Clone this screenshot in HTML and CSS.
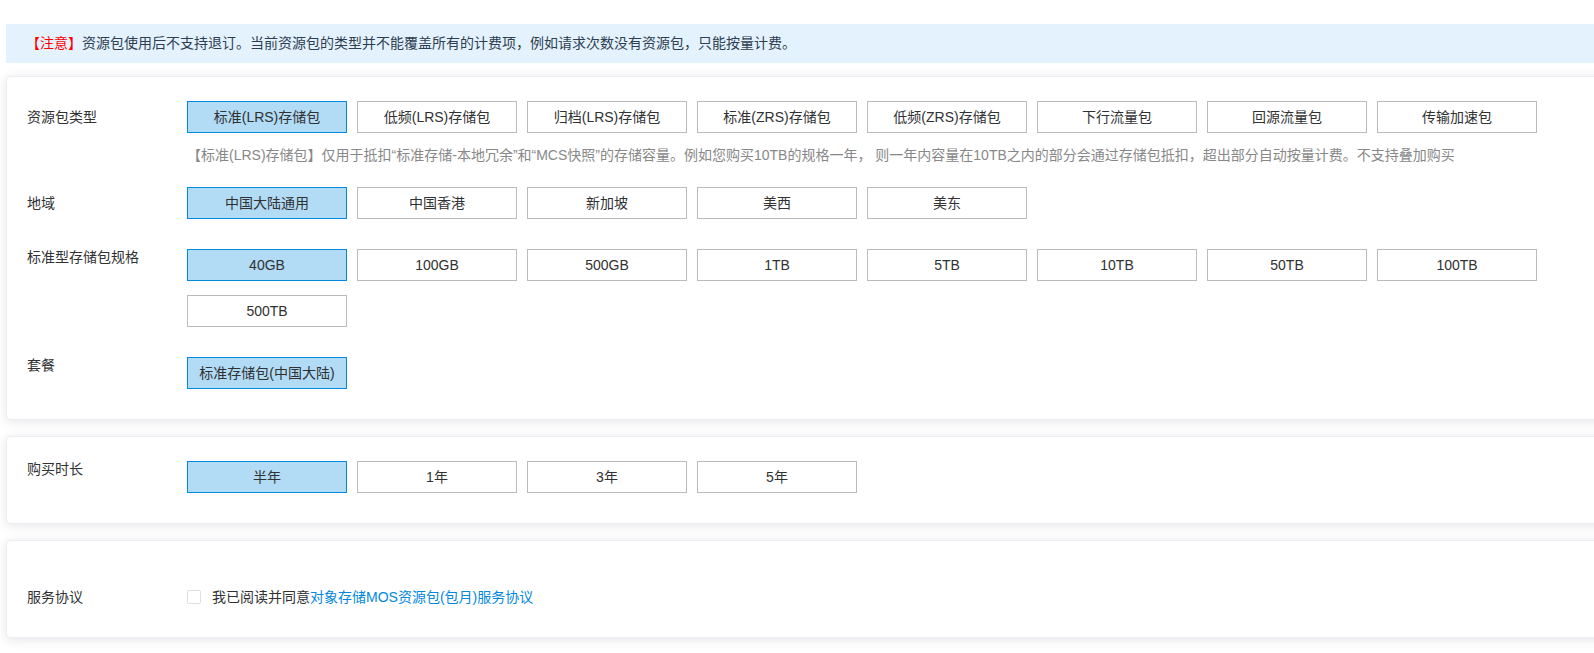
FILE: index.html
```html
<!DOCTYPE html>
<html lang="zh-CN">
<head>
    <meta charset="UTF-8">
    <meta name="viewport" content="width=device-width, initial-scale=1.0">
    <title>购买资源包</title>
    <link rel="stylesheet" href="styles.css">
</head>
<body>
    <main class="page">
        <div class="notice"><span class="warn">【注意】</span>资源包使用后不支持退订。当前资源包的类型并不能覆盖所有的计费项，例如请求次数没有资源包，只能按量计费。</div>

        <section class="card">
            <div class="row row-hint">
                <div class="label label-center" id="type">资源包类型</div>
                <div class="content">
                    <div class="options" role="group" aria-labelledby="type">
                        <button type="button" class="option active">标准(LRS)存储包</button>
                        <button type="button" class="option">低频(LRS)存储包</button>
                        <button type="button" class="option">归档(LRS)存储包</button>
                        <button type="button" class="option">标准(ZRS)存储包</button>
                        <button type="button" class="option">低频(ZRS)存储包</button>
                        <button type="button" class="option">下行流量包</button>
                        <button type="button" class="option">回源流量包</button>
                        <button type="button" class="option">传输加速包</button>
                    </div>
                    <p class="hint">【标准(LRS)存储包】仅用于抵扣“标准存储-本地冗余”和“MCS快照”的存储容量。例如您购买10TB的规格一年， 则一年内容量在10TB之内的部分会通过存储包抵扣，超出部分自动按量计费。不支持叠加购买</p>
                </div>
            </div>
            <div class="row">
                <div class="label label-center" id="region">地域</div>
                <div class="content options" role="group" aria-labelledby="region">
                    <button type="button" class="option active">中国大陆通用</button>
                    <button type="button" class="option">中国香港</button>
                    <button type="button" class="option">新加坡</button>
                    <button type="button" class="option">美西</button>
                    <button type="button" class="option">美东</button>
                </div>
            </div>
            <div class="row">
                <div class="label" id="spec">标准型存储包规格</div>
                <div class="content options" role="group" aria-labelledby="spec">
                    <button type="button" class="option active">40GB</button>
                    <button type="button" class="option">100GB</button>
                    <button type="button" class="option">500GB</button>
                    <button type="button" class="option">1TB</button>
                    <button type="button" class="option">5TB</button>
                    <button type="button" class="option">10TB</button>
                    <button type="button" class="option">50TB</button>
                    <button type="button" class="option">100TB</button>
                    <button type="button" class="option">500TB</button>
                </div>
            </div>
            <div class="row">
                <div class="label" id="package">套餐</div>
                <div class="content options" role="group" aria-labelledby="package">
                    <button type="button" class="option active">标准存储包(中国大陆)</button>
                </div>
            </div>
        </section>

        <section class="card">
            <div class="row">
                <div class="label" id="duration">购买时长</div>
                <div class="content options" role="group" aria-labelledby="duration">
                    <button type="button" class="option active">半年</button>
                    <button type="button" class="option">1年</button>
                    <button type="button" class="option">3年</button>
                    <button type="button" class="option">5年</button>
                </div>
            </div>
        </section>

        <section class="card card-agreement">
            <div class="row">
                <div class="label">服务协议</div>
                <div class="content agreement">
                    <input type="checkbox" id="agree">
                    <label for="agree">我已阅读并同意</label><a href="#">对象存储MOS资源包(包月)服务协议</a>
                </div>
            </div>
        </section>
    </main>

    <script>
    // 每组选项只能选中一个
    document.querySelectorAll(".options").forEach(function (group) {
        group.addEventListener("click", function (e) {
            if (!e.target.classList.contains("option")) return;
            group.querySelector(".active").classList.remove("active");
            e.target.classList.add("active");
        });
    });
    </script>
</body>
</html>
```
FILE: styles.css
```css
* {
    box-sizing: border-box;
}
body {
    margin: 0;
    background: #fff;
    color: #303133;
    font-family: "Liberation Sans", Arial, "Noto Sans CJK SC", sans-serif;
    font-size: 14px;
    line-height: 16px;
}
.page {
    padding: 24px 0 15px 6px;
    overflow: hidden;
}
.notice {
    margin-bottom: 13px;
    padding: 9px 20px 10px;
    background: #e4f2fe;
    color: #2c3e50;
    line-height: 20px;
}
.warn {
    color: #f00;
}
/* cards run past the right edge */
.card {
    margin: 0 -20px 16px 0;
    padding: 24px 20px 30px;
    background: #fff;
    border: 1px solid #ebeef5;
    border-radius: 4px;
    box-shadow: 0 2px 12px rgba(0, 0, 0, 0.1);
}
.card:last-child {
    margin-bottom: 0;
}
.row {
    display: flex;
    margin-bottom: 30px;
}
.row:last-child {
    margin-bottom: 0;
}
.row-hint {
    margin-bottom: 24px;
}
.label {
    flex: 0 0 160px;
}
.label-center {
    line-height: 32px;
}
.content {
    flex: 1;
    min-width: 0;
}
.options {
    display: flex;
    flex-wrap: wrap;
    gap: 14px 10px;
}
.option {
    width: 160px;
    height: 32px;
    padding: 0;
    background: #fff;
    border: 1px solid #bbb;
    color: #303133;
    font: inherit;
    text-align: center;
    cursor: pointer;
}
.option.active {
    background: #b2dbf5;
    border-color: #0388dd;
}
.hint {
    margin: 14px 0 0;
    color: #888;
}
.card-agreement {
    padding: 48px 20px 32px;
}
.agreement {
    display: flex;
    align-items: center;
}
.agreement input {
    appearance: none;
    width: 14px;
    height: 14px;
    margin: 0 11px 0 0;
    background: #fff;
    border: 1px solid #dcdfe6;
    border-radius: 2px;
}
.agreement input:checked {
    background: #0388dd;
    border-color: #0388dd;
}
.agreement a {
    color: #0388dd;
    text-decoration: none;
}
```
